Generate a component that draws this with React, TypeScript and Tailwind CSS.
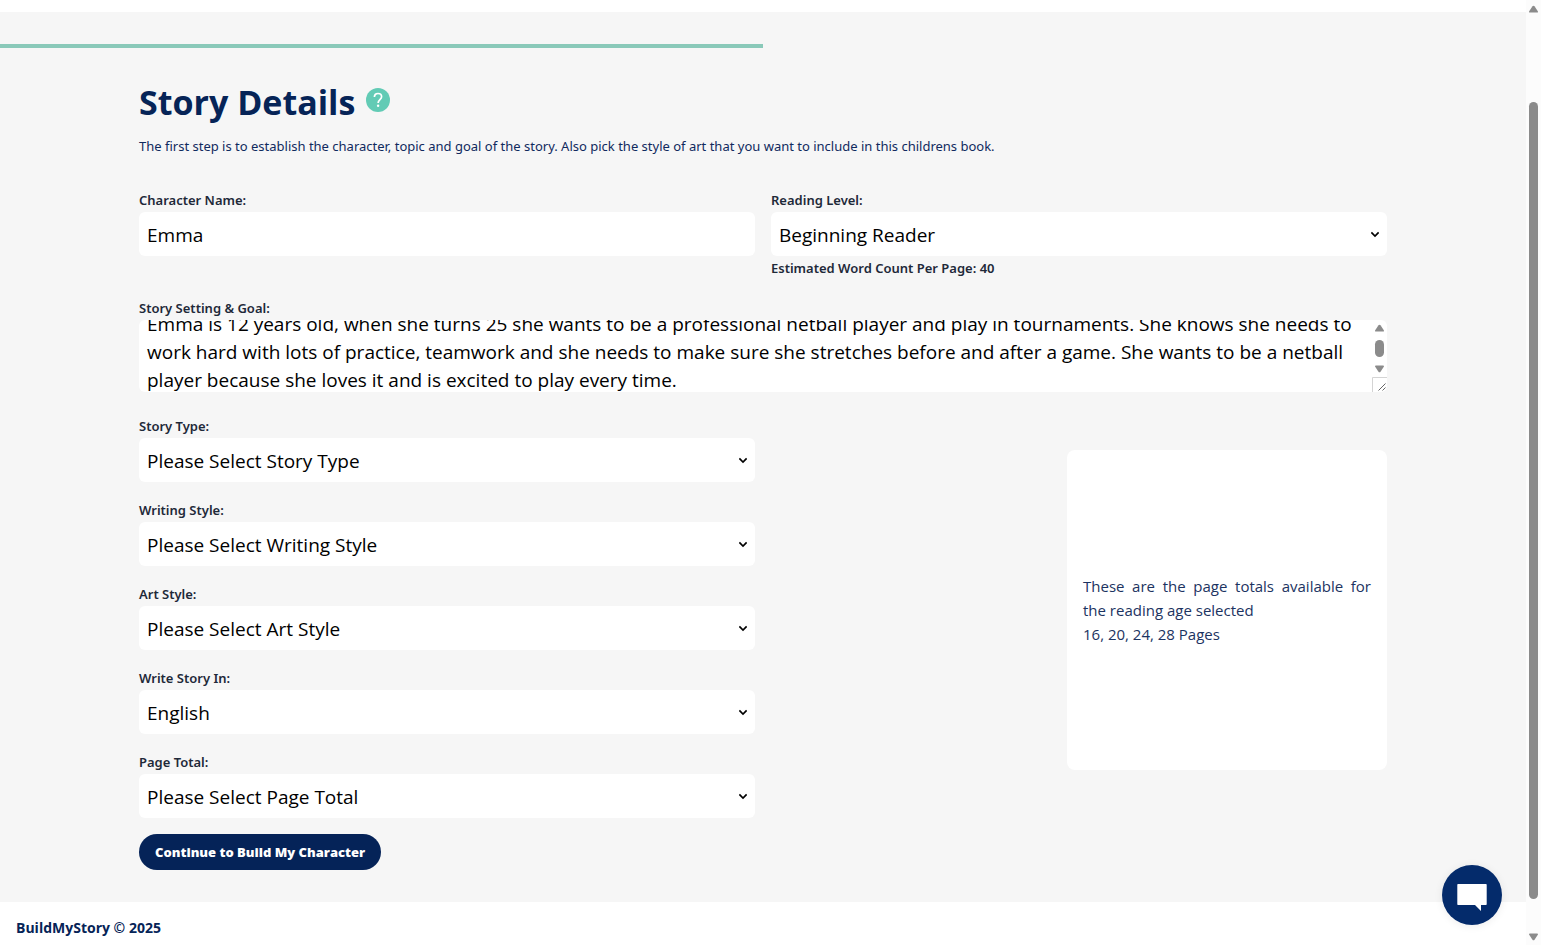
import { useLayoutEffect, useRef, type ReactNode } from "react";

const STORY =
  "Emma is 12 years old, when she turns 25 she wants to be a professional netball player and play in tournaments. She knows she needs to work hard with lots of practice, teamwork and she needs to make sure she stretches before and after a game. She wants to be a netball player because she loves it and is excited to play every time.";

function Field({ id, label, children }: { id: string; label: string; children: ReactNode }) {
  return (
    <div>
      <label
        htmlFor={id}
        className="block font-['Noto_Sans',sans-serif] text-[13px] leading-6 font-semibold text-gray-800"
      >
        {label}
      </label>
      {children}
    </div>
  );
}

function SelectField({ id, label, option }: { id: string; label: string; option: string }) {
  return (
    <Field id={id} label={label}>
      <div className="relative">
        <select
          id={id}
          className="block h-11 w-full appearance-none rounded-md bg-white px-2 pt-0.5 text-[19px] leading-7 text-black"
        >
          <option>{option}</option>
        </select>
        <svg
          className="pointer-events-none absolute top-1/2 right-2 h-2 w-2 -translate-y-1/2"
          viewBox="0 0 8 8"
          fill="none"
          stroke="black"
          strokeWidth="1.6"
          aria-hidden="true"
        >
          <path d="M0.4 2.4 L4 6 L7.6 2.4" />
        </svg>
      </div>
    </Field>
  );
}

function Arrow({ down = false }: { down?: boolean }) {
  return (
    <svg width="9" height="8" viewBox="0 0 9 8" fill="#8b8b8b" aria-hidden="true">
      <path
        d={
          down
            ? "M1 0.5h7q1.4 0 0.8 1.2L5.7 6.5Q4.5 8.2 3.3 6.5L0.2 1.7Q-.4 .5 1 .5z"
            : "M1 7.5h7q1.4 0 0.8 -1.2L5.7 1.5Q4.5 -.2 3.3 1.5L0.2 6.3Q-.4 7.5 1 7.5z"
        }
      />
    </svg>
  );
}

function StoryGoal() {
  const ref = useRef<HTMLTextAreaElement>(null);
  useLayoutEffect(() => {
    if (ref.current) ref.current.scrollTop = 18;
  }, []);
  return (
    <Field id="goal" label="Story Setting & Goal:">
      <div className="flex h-[72px] overflow-hidden rounded-md bg-white">
        <textarea
          id="goal"
          ref={ref}
          defaultValue={STORY}
          className="h-full flex-1 resize-none overflow-hidden p-2 text-[19px] leading-7 text-black"
        />
        <div className="flex w-[15px] flex-col items-center pt-1" aria-hidden="true">
          <Arrow />
          <div className="my-2 h-[17px] w-[9px] rounded-full bg-[#8b8b8b]" />
          <Arrow down />
          <svg className="mt-auto" width="15" height="15" viewBox="0 0 15 15" fill="none">
            <path d="M0.5 15V0.5H15" stroke="#d4d4d4" />
            <path d="M6.5 13.5l7-7M10.5 13.5l3-3" stroke="#555" strokeWidth="0.9" />
          </svg>
        </div>
      </div>
    </Field>
  );
}

export default function App() {
  return (
    <div className="flex min-h-screen bg-white font-['Open_Sans','Noto_Sans',sans-serif]">
      <div className="flex min-w-0 flex-1 flex-col">
        <div className="h-3 bg-white" />
        <main className="bg-[#f6f6f6] py-8">
          <div className="h-1 w-1/2 bg-[#8ac9b9]" />
          <div className="mx-auto max-w-7xl px-4 pt-8">
            <div className="flex items-center gap-[11px]">
              <h1 className="text-[34px] leading-[44px] font-bold text-[#062457]">Story Details</h1>
              <button type="button" aria-label="Help" className="mb-1 size-6">
                <svg viewBox="0 0 24 24" aria-hidden="true">
                  <circle cx="12" cy="12" r="12" fill="#62cbb5" />
                  <path
                    d="M8.4 9.1C8.4 6.8 10 5.5 12 5.5s3.6 1.3 3.6 3.3c0 2.8-3.5 3.1-3.5 6.3"
                    fill="none"
                    stroke="white"
                    strokeWidth="1.7"
                  />
                  <circle cx="12.1" cy="17.8" r="1.2" fill="white" />
                </svg>
              </button>
            </div>
            <p className="mt-2.5 font-['Noto_Sans',sans-serif] text-[13px] leading-6 text-[#102a5e]">
              The first step is to establish the character, topic and goal of the story. Also pick the style of art
              that you want to include in this childrens book.
            </p>
            <form className="mt-[30px]" onSubmit={(e) => e.preventDefault()}>
              <div className="grid grid-cols-2 gap-4">
                <Field id="name" label="Character Name:">
                  <input
                    id="name"
                    type="text"
                    defaultValue="Emma"
                    className="block h-11 w-full rounded-md bg-white px-2 pt-0.5 text-[19px] leading-7 text-black"
                  />
                </Field>
                <div>
                  <SelectField id="level" label="Reading Level:" option="Beginning Reader" />
                  <p className="font-['Noto_Sans',sans-serif] text-[13px] leading-6 font-semibold text-gray-800">
                    Estimated Word Count Per Page: 40
                  </p>
                </div>
              </div>
              <div className="mt-4">
                <StoryGoal />
              </div>
              <div className="mt-[22px] grid grid-cols-2 gap-4">
                <div className="flex flex-col gap-4">
                  <SelectField id="type" label="Story Type:" option="Please Select Story Type" />
                  <SelectField id="writing" label="Writing Style:" option="Please Select Writing Style" />
                  <SelectField id="art" label="Art Style:" option="Please Select Art Style" />
                  <SelectField id="language" label="Write Story In:" option="English" />
                  <SelectField id="pages" label="Page Total:" option="Please Select Page Total" />
                </div>
                <div className="mt-9 flex size-80 flex-col justify-center justify-self-end rounded-lg bg-white p-4 text-[15px] leading-6 text-[#1c3361]">
                  <p className="text-justify">These are the page totals available for the reading age selected</p>
                  <p>16, 20, 24, 28 Pages</p>
                </div>
              </div>
              <button
                type="submit"
                className="mt-4 block h-9 rounded-full bg-[#052358] px-4 text-[13px] leading-5 font-extrabold text-white"
              >
                Continue to Build My Character
              </button>
            </form>
          </div>
        </main>
        <footer className="px-4 pt-4 text-[14px] leading-5 font-bold text-[#062457]">BuildMyStory © 2025</footer>
      </div>
      <div className="flex w-[15px] flex-col items-center bg-[#fcfcfc] pt-[5px] pb-1" aria-hidden="true">
        <Arrow />
        <div className="mt-[89px] mb-[34px] w-[9px] flex-1 rounded-full bg-[#8b8b8b]" />
        <Arrow down />
      </div>
      <button
        type="button"
        aria-label="Open chat"
        className="fixed right-[39px] bottom-5 flex size-[60px] items-center justify-center rounded-full bg-[#042b6b] shadow-[0_1px_8px_rgba(0,0,0,0.08)]"
      >
        <svg width="30" height="34" viewBox="0 -3 30 34" fill="white" aria-hidden="true">
          <path d="M1 3h28q.7 0 .7.7v19.6q0 .7-.7.7h-5v6l-6-6H1q-.7 0-.7-.7V3.7Q.3 3 1 3z" />
        </svg>
      </button>
    </div>
  );
}
